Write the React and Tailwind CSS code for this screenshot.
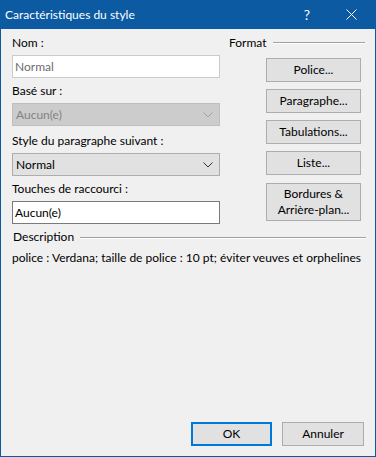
import React from "react";

const font = { fontFamily: 'Lato, "Noto Sans", sans-serif' };

function Chevron({ color }) {
  return (
    <svg width="10" height="6" viewBox="0 0 10 6" className="block">
      <path d="M0.5 0.5 L5 5 L9.5 0.5" fill="none" stroke={color} strokeWidth="1" />
    </svg>
  );
}

function Btn({ children, tall }) {
  return (
    <div
      className={`w-[95px] ${tall ? "h-[38px]" : "h-[24px]"} border border-[#adadad] bg-[#e1e1e1] flex items-center justify-center text-center text-[12px] leading-[16px] text-black`}
    >
      {children}
    </div>
  );
}

export default function App() {
  return (
    <div
      className="w-[376px] h-[457px] flex flex-col bg-[#f0f0f0] border-x border-b border-[#0b5aa2] text-black text-[12px]"
      style={font}
    >
      {/* Title bar */}
      <div className="h-[29px] shrink-0 bg-[#0b5aa2] flex items-center text-white -mx-px px-[5px]">
        <span className="text-[12px] leading-[16px] pt-[1px]">Caractéristiques du style</span>
        <span className="ml-auto mr-[36px] text-[14px] leading-[16px]">?</span>
        <svg width="11" height="11" viewBox="0 0 11 11" className="mr-[14px]">
          <path d="M0.5 0.5 L10.5 10.5 M10.5 0.5 L0.5 10.5" stroke="white" strokeWidth="1" />
        </svg>
      </div>

      {/* Body */}
      <div className="flex-1 flex flex-col pl-[11px] pr-[9px]">
        <div className="flex">
          {/* Left column */}
          <div className="w-[208px] flex flex-col">
            <div className="h-[26px] pt-[6px] leading-[16px]">Nom :</div>
            <div className="h-[23px] border border-[#cccccc] bg-white flex items-center px-[2px] text-[#6d6d6d] leading-[16px]">
              Normal
            </div>
            <div className="h-[25px] pt-[5px] leading-[16px]">Basé sur :</div>
            <div className="h-[23px] border border-[#bfbfbf] bg-[#cccccc] flex items-center pl-[3px] pr-[6px] text-[#838383] leading-[16px]">
              <span>Aucun(e)</span>
              <span className="ml-auto">
                <Chevron color="#a3a3a3" />
              </span>
            </div>
            <div className="h-[27px] pt-[7px] leading-[16px]">Style du paragraphe suivant :</div>
            <div className="h-[23px] border border-[#adadad] bg-[#e1e1e1] flex items-center pl-[3px] pr-[6px] leading-[16px]">
              <span>Normal</span>
              <span className="ml-auto">
                <Chevron color="#333333" />
              </span>
            </div>
            <div className="h-[25px] pt-[5px] leading-[16px]">Touches de raccourci :</div>
            <div className="h-[23px] border border-[#7a7a7a] bg-white flex items-center px-[2px] leading-[16px]">
              Aucun(e)
            </div>
          </div>

          {/* Right column */}
          <div className="flex-1 flex flex-col ml-[9px]">
            <div className="h-[26px] pt-[6px] flex items-start">
              <span className="leading-[16px]">Format</span>
              <div className="flex-1 ml-[6px] mt-[7px] border-t border-[#a0a0a0] border-b border-b-white mr-[1px]" />
            </div>
            <div className="flex flex-col items-end gap-[7px] mt-[3px] pr-[5px]">
              <Btn>Police...</Btn>
              <Btn>Paragraphe...</Btn>
              <Btn>Tabulations...</Btn>
              <Btn>Liste...</Btn>
              <div className="mt-[1px]">
                <Btn tall>
                  <span>
                    Bordures &amp;
                    <br />
                    Arrière-plan...
                  </span>
                </Btn>
              </div>
            </div>
          </div>
        </div>

        {/* Description */}
        <div className="h-[25px] pt-[5px] flex items-start pl-[1px]">
          <span className="leading-[16px]">Description</span>
          <div className="flex-1 ml-[6px] mt-[8px] border-t border-[#a0a0a0] border-b border-b-white" />
        </div>
        <div className="pt-[1px] leading-[16px] whitespace-nowrap">
          police : Verdana; taille de police : 10 pt; éviter veuves et orphelines
        </div>

        <div className="flex-1" />

        {/* Bottom buttons */}
        <div className="flex justify-end gap-[10px] pr-[2px] pb-[10px]">
          <div className="w-[81px] h-[24px] border-2 border-[#0078d7] bg-[#e1e1e1] flex items-center justify-center leading-[16px]">
            OK
          </div>
          <div className="w-[82px] h-[24px] border border-[#adadad] bg-[#e1e1e1] flex items-center justify-center leading-[16px]">
            Annuler
          </div>
        </div>
      </div>
    </div>
  );
}
